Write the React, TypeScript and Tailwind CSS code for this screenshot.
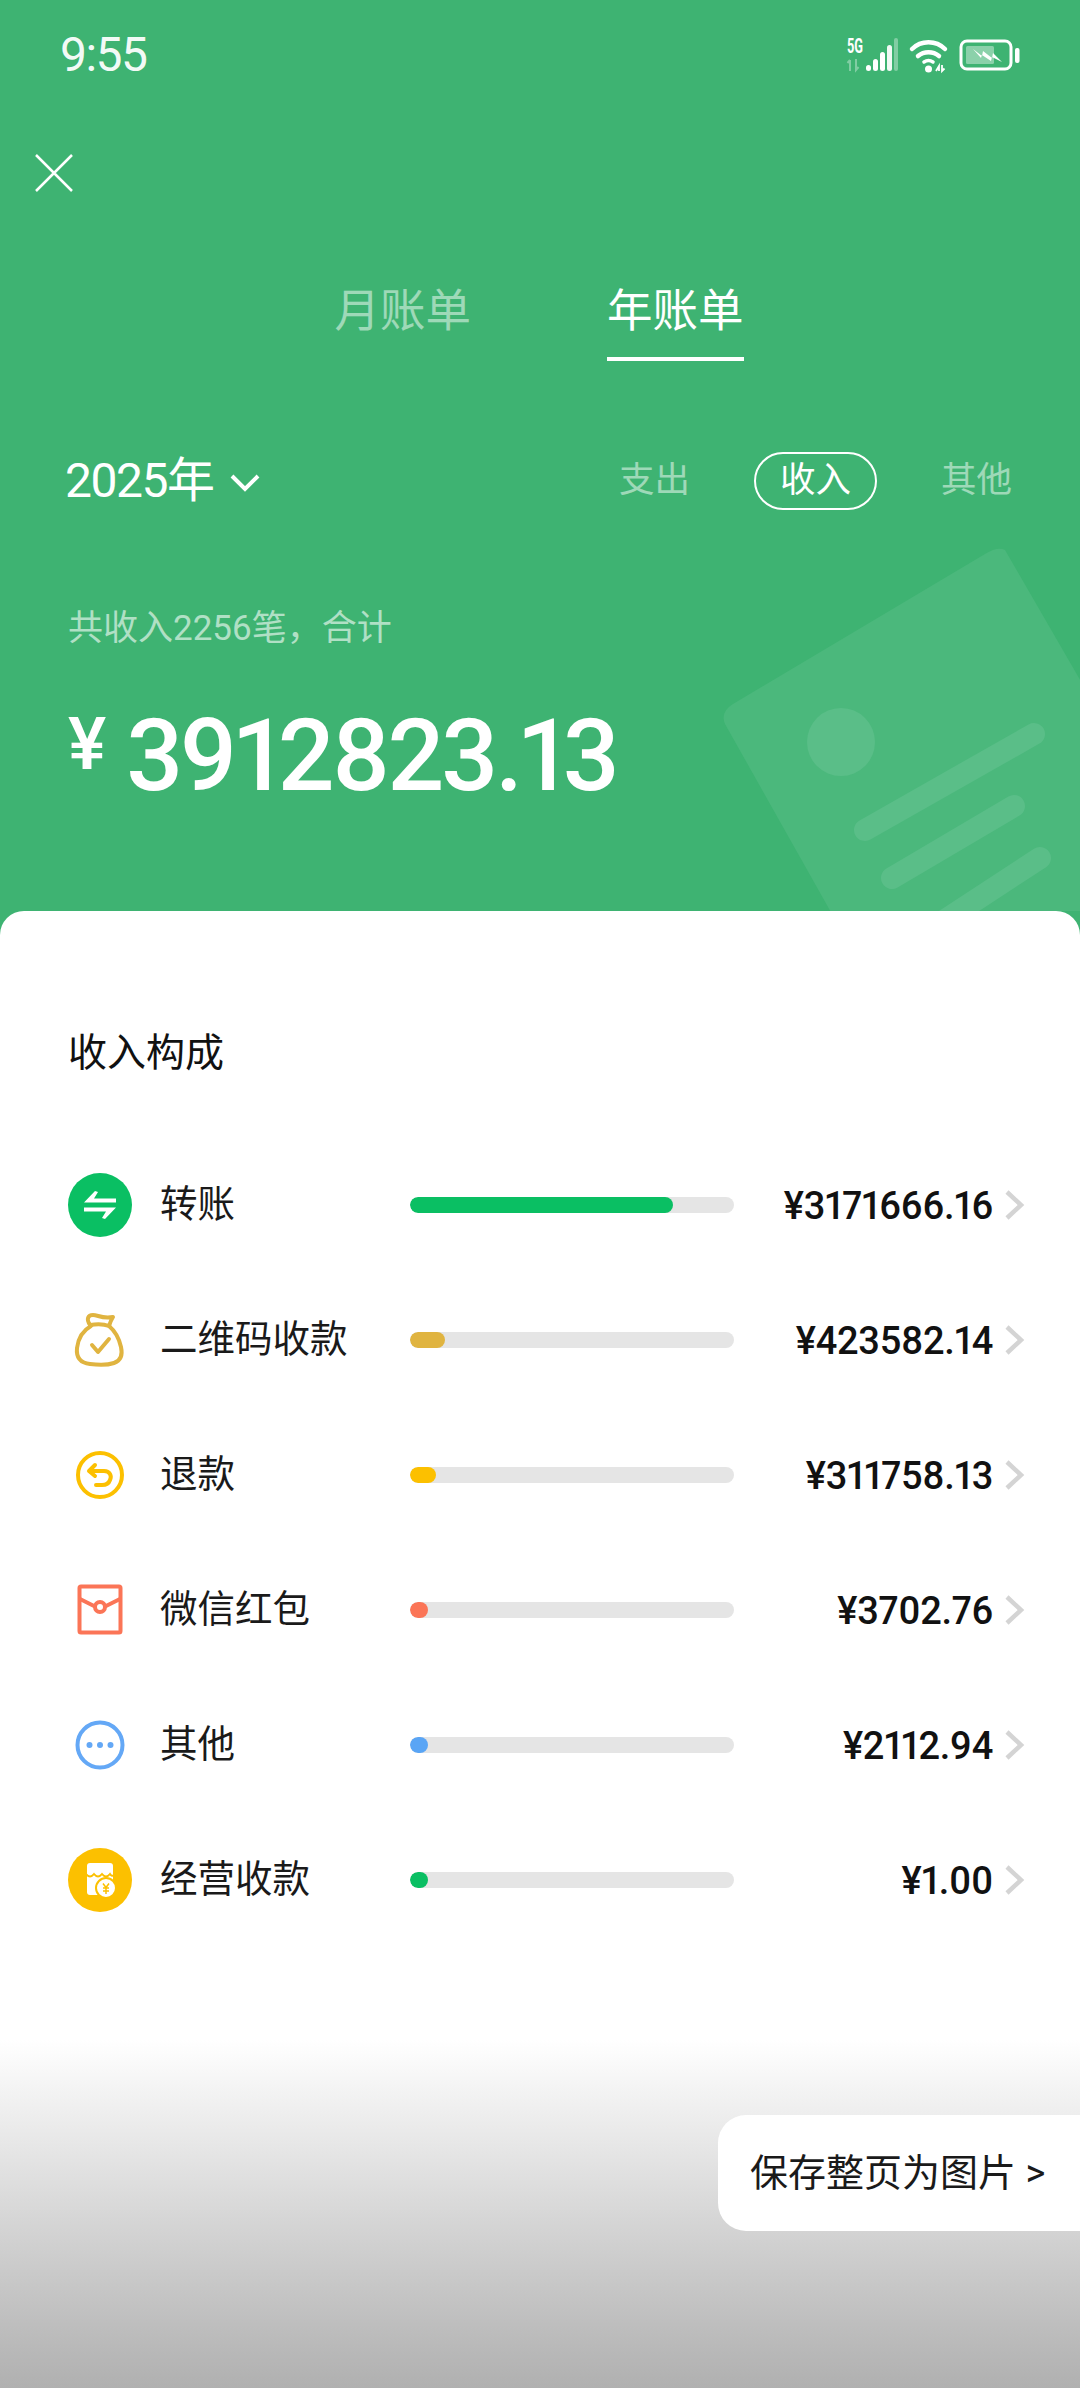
const FONT = "font-['Roboto','Noto_Sans_CJK_SC',sans-serif]";

function StatusIcons() {
  return (
    <svg width="176" height="36" viewBox="0 0 176 36" fill="none" className="mt-[2px] overflow-visible">
      <text x="0" y="15" fill="#fff" fontSize="20" fontWeight="700" fontFamily="Roboto" textLength="16" lengthAdjust="spacingAndGlyphs">5G</text>
      <path d="M3 33V22M3 22l-2.500 3M9 21v11l2.500-3" stroke="#fff" strokeOpacity=".35" strokeWidth="2" />
      <rect x="19" y="27" width="5" height="6" rx="2.500" fill="#fff" />
      <rect x="26" y="21" width="5" height="12" rx="2.500" fill="#fff" />
      <rect x="33" y="14" width="5" height="19" rx="2.500" fill="#fff" />
      <rect x="40" y="7" width="5" height="26" rx="2.500" fill="#fff" fillOpacity=".92" />
      <rect x="47" y="0" width="4" height="33" rx="2" fill="#fff" fillOpacity=".35" />
      <g transform="translate(4 0)">
        <path d="M61 11c9-9 24-9 33 0" stroke="#fff" strokeWidth="4.500" strokeLinecap="round" />
        <path d="M67 18c6-5 15-5 21 0" stroke="#fff" strokeWidth="4.500" strokeLinecap="round" />
        <path d="M73 24c3-2 6-2 9 0" stroke="#fff" strokeWidth="3.500" strokeLinecap="round" />
        <circle cx="77.500" cy="31" r="3.500" fill="#fff" />
        <path d="M85 33l3-5v5M91 27v6l2.500-2.500" stroke="#fff" strokeWidth="1.800" />
      </g>
      <g transform="translate(12 0)">
        <rect x="102" y="3" width="50" height="28" rx="6" stroke="#fff" strokeWidth="3" />
        <rect x="107" y="8" width="28" height="18" rx="1.500" fill="#fff" fillOpacity=".4" />
        <path d="M114 11l9 7 1-5 9 7 1-5 9 9-10-5-1 4-9-6-1 3z" fill="#fff" />
        <rect x="156" y="10" width="4.500" height="15" rx="2" fill="#fff" />
      </g>
    </svg>
  );
}

function Watermark() {
  return (
    <svg className="absolute left-[700px] top-[530px]" width="380" height="381" viewBox="700 530 380 381" fill="none">
      <path d="M1005 550 L1090 697 L1090 930 L841 930 L725 724 Q720 712 733 704 L985 554 Q998 546 1005 550Z" fill="#4bb87c" />
      <circle cx="841" cy="742" r="34" fill="#5abe88" />
      <g stroke="#5abe88" strokeWidth="22" strokeLinecap="round">
        <line x1="865" y1="830" x2="1034" y2="734" />
        <line x1="892" y1="878" x2="1014" y2="806" />
        <line x1="930" y1="930" x2="1040" y2="858" />
      </g>
    </svg>
  );
}

function TransferIcon() {
  return (
    <span className="w-16 h-16 rounded-full bg-[#0abf63] flex items-center justify-center">
      <svg width="34" height="30" viewBox="0 0 34 30" fill="#fff">
        <path d="M1 12.500 L12 1 L15 2 L11 8.500 H33 V12.500Z" />
        <path d="M33 17.500 L22 29 L19 28 L23 21.500 H1 V17.500Z" />
      </svg>
    </span>
  );
}

function BagIcon() {
  return (
    <svg width="64" height="64" viewBox="0 0 64 64" fill="none" stroke="#e0b440" strokeWidth="4" strokeLinecap="round" strokeLinejoin="round">
      <path d="M22 17 C18 11 20 7 25 7 C30 7 34 11 45 9 C43 12 42 15 41 18 C36 16 28 16 22 17Z" />
      <path d="M23 18 C14 23 10 32 9 40 C8 50 13 55 22 56 C30 57 40 57 46 55 C52 53 55 48 53 39 C51 30 47 23 41 18" />
      <path d="M24 37 L30 44 L41 31" />
    </svg>
  );
}

function RefundIcon() {
  return (
    <svg width="64" height="64" viewBox="0 0 64 64" fill="none" stroke="#fcc000" strokeWidth="4" strokeLinecap="round" strokeLinejoin="round">
      <circle cx="32" cy="32" r="22" />
      <path d="M27 22 L21 28 L27 33" />
      <path d="M22 28 H36 C42 28 44 33 42 37 C41 40 38 42 34 42 H28" />
    </svg>
  );
}

function PacketIcon() {
  return (
    <svg width="64" height="64" viewBox="0 0 64 64" fill="none" stroke="#fb7557" strokeWidth="4" strokeLinejoin="round">
      <rect x="11.500" y="8.500" width="41" height="46" rx="1.500" />
      <path d="M12 21 L27 28.500 M37 28.500 L52 21" />
      <circle cx="32" cy="29" r="5" />
    </svg>
  );
}

function MoreIcon() {
  return (
    <svg width="64" height="64" viewBox="0 0 64 64" fill="none">
      <circle cx="32" cy="32" r="22.500" stroke="#64a8f6" strokeWidth="4" />
      <circle cx="21.500" cy="32" r="3" fill="#64a8f6" />
      <circle cx="32" cy="32" r="3" fill="#64a8f6" />
      <circle cx="42.500" cy="32" r="3" fill="#64a8f6" />
    </svg>
  );
}

function ShopIcon() {
  return (
    <span className="w-16 h-16 rounded-full bg-[#fcc000] flex items-center justify-center">
      <svg width="64" height="64" viewBox="0 0 64 64" fill="none">
        <path d="M19 18 Q19 15 22 15 H42 Q45 15 45 18 V44 Q45 47 42 47 H22 Q19 47 19 44Z" fill="#fff" />
        <path d="M18 26 Q22 31 26 26 Q30 31 34 26 Q38 31 42 26 Q44 29 46 27" stroke="#fcc000" strokeWidth="2" />
        <circle cx="38" cy="40" r="10" fill="#fff" stroke="#fcc000" strokeWidth="2" />
        <path d="M35 35.500 L38 39.500 L41 35.500 M35 40 H41 M35 43 H41 M38 39.500 V46" stroke="#fcc000" strokeWidth="1.500" />
      </svg>
    </span>
  );
}

const rows = [
  { icon: <TransferIcon />, label: "转账", fill: "w-[263px] bg-[#0abf63]", amount: "¥3171666.16" },
  { icon: <BagIcon />, label: "二维码收款", fill: "w-[35px] bg-[#e0b440]", amount: "¥423582.14" },
  { icon: <RefundIcon />, label: "退款", fill: "w-[26px] bg-[#fcc000]", amount: "¥311758.13" },
  { icon: <PacketIcon />, label: "微信红包", fill: "w-[18px] bg-[#fb7557]", amount: "¥3702.76" },
  { icon: <MoreIcon />, label: "其他", fill: "w-[18px] bg-[#5aa5f5]", amount: "¥2112.94" },
  { icon: <ShopIcon />, label: "经营收款", fill: "w-[18px] bg-[#0abf63]", amount: "¥1.00" },
];

export default function App() {
  return (
    <div className={`relative w-[1080px] h-[2388px] overflow-hidden bg-[#3eb372] ${FONT}`}>
      <Watermark />

      <div className="relative h-[911px] text-white">
        <div className="flex items-center justify-between pl-[60px] pr-[57px] pt-[30px] h-[80px]">
          <span className="text-[48px] leading-none tracking-[-1.5px] text-white/95">9:55</span>
          <StatusIcons />
        </div>

        <div className="pl-[35px] pt-[74px]">
          <svg width="38" height="38" viewBox="0 0 38 38" stroke="#fff" strokeWidth="2.500" fill="none">
            <path d="M1 1 L37 37 M37 1 L1 37" />
          </svg>
        </div>

        <div className="flex justify-center gap-[136px] mt-[90px] ml-[-2px]">
          <span className="text-[45.500px] leading-[60px] pb-[19px] text-white/50">月账单</span>
          <span className="text-[45.500px] leading-[60px] pb-[15px] border-b-[4px] border-white">年账单</span>
        </div>

        <div className="flex items-center justify-between pl-[65px] pr-[68px] mt-[90px] h-[60px]">
          <div className="flex items-center">
            <span className="text-[48px] leading-none tracking-[-1.5px]">2025年</span>
            <svg className="ml-[17px] mt-[4px]" width="30" height="20" viewBox="0 0 30 20" fill="none" stroke="#fff" strokeWidth="4">
              <path d="M2 3 L15 16 L28 3" />
            </svg>
          </div>
          <div className="flex items-center">
            <span className="text-[35.500px] text-white/50">支出</span>
            <span className="text-[35.500px] ml-[64px] w-[123px] h-[58px] rounded-full border-2 border-white flex items-center justify-center">收入</span>
            <span className="text-[35.500px] ml-[64px] text-white/50">其他</span>
          </div>
        </div>

        <div className="pl-[68px] mt-[93px] text-[35px] leading-[50px] text-white/60">共收入2256笔，合计</div>

        <div className="flex items-start pl-[68px] mt-[52px]">
          <span className="text-[72px] leading-[70px] font-medium mr-[20px] pt-[4px]">¥</span>
          <span className="text-[100px] leading-[100px] font-medium proportional-nums tracking-[-3px]">3912823.13</span>
        </div>
      </div>

      <div className="relative h-[1477px] bg-white rounded-t-[24px] pl-[68px] pr-[40px] pt-[116px]">
        <h2 className="text-[39px] leading-[52px] font-normal text-[#111]">收入构成</h2>

        <div className="mt-[58px]">
          {rows.map((row) => (
            <div key={row.label} className="flex items-center h-[135px]">
              <span className="w-16 h-16 shrink-0">{row.icon}</span>
              <span className="w-[278px] shrink-0 pl-[28px] text-[37.500px] text-[#1a1a1a]">{row.label}</span>
              <span className="w-[324px] shrink-0 h-[16px] rounded-full bg-[#e5e5e5] overflow-hidden">
                <span className={`block h-full rounded-full ${row.fill}`} />
              </span>
              <span className="w-[259px] shrink-0 text-right text-[38px] leading-[50px] pt-[2px] font-medium proportional-nums text-[#111] tracking-[-0.3px]">{row.amount}</span>
              <svg className="ml-[10px] shrink-0" width="22" height="30" viewBox="0 0 22 30" fill="none" stroke="#d4d4d4" strokeWidth="4.500">
                <path d="M4 2 L18 15 L4 28" />
              </svg>
            </div>
          ))}
        </div>
      </div>

      <div className="absolute left-0 right-0 bottom-0 h-[348px] bg-gradient-to-b from-white to-[#b0b0b0]" />

      <div className="absolute right-0 top-[2115px] w-[362px] h-[116px] bg-white rounded-l-[28px] flex items-center pl-[32px] text-[38px] text-[#1a1a1a]">
        保存整页为图片 &gt;
      </div>
    </div>
  );
}
